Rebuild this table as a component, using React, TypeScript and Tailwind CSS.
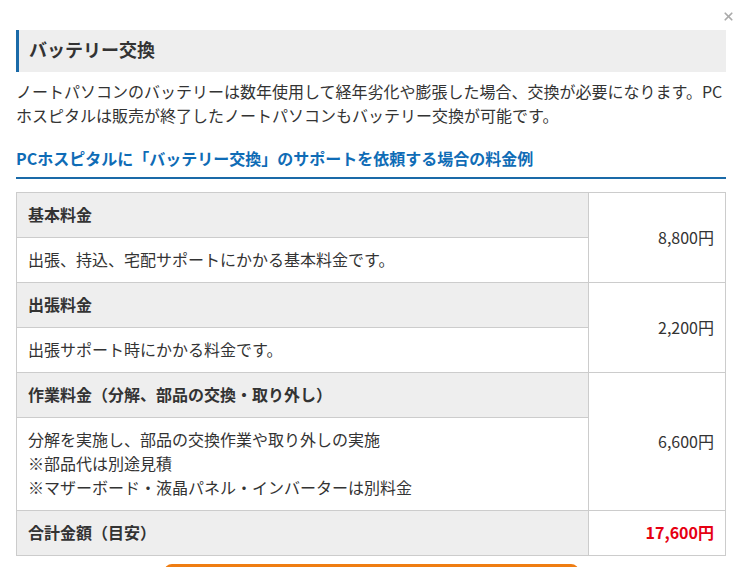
import { X } from 'lucide-react';

const rows = [
  {
    title: '基本料金',
    lines: ['出張、持込、宅配サポートにかかる基本料金です。'],
    price: '8,800円',
  },
  {
    title: '出張料金',
    lines: ['出張サポート時にかかる料金です。'],
    price: '2,200円',
  },
  {
    title: '作業料金（分解、部品の交換・取り外し）',
    lines: [
      '分解を実施し、部品の交換作業や取り外しの実施',
      '※部品代は別途見積',
      '※マザーボード・液晶パネル・インバーターは別料金',
    ],
    price: '6,600円',
  },
];

export default function App() {
  return (
    <div className="relative h-[567px] overflow-hidden bg-white px-4 pt-[30px] font-['Noto_Sans_CJK_JP',sans-serif] text-[#333]">
      <button className="absolute right-[6px] top-[9px] p-[1px] text-[#aaa]">
        <X size={13} strokeWidth={3.2} />
      </button>

      <h2 className="border-l-[3px] border-[#1a6aa8] bg-[#eee] pb-[10px] pl-[10px] pt-[6px] text-[18px] font-bold leading-[26px] text-[#333]">
        バッテリー交換
      </h2>

      <p className="mt-[7px] text-[16px] leading-6">
        ノートパソコンのバッテリーは数年使用して経年劣化や膨張した場合、交換が必要になります。PCホスピタルは販売が終了したノートパソコンもバッテリー交換が可能です。
      </p>

      <h3 className="mt-[19px] border-b-2 border-[#1a6aa8] pb-[7px] text-[16px] font-bold leading-6 text-[#0f6cb6]">
        PCホスピタルに「バッテリー交換」のサポートを依頼する場合の料金例
      </h3>

      <table className="mt-[13px] w-full border-collapse text-[16px] leading-6">
        <tbody>
          {rows.map((row) => (
            <>
              <tr key={row.title + '-h'}>
                <th className="w-[572px] border border-[#ccc] bg-[#eee] px-[11px] pb-[11px] pt-[9px] text-left font-bold">
                  {row.title}
                </th>
                <td
                  rowSpan={2}
                  className="border border-[#ccc] px-[11px] pb-[11px] pt-[9px] text-right align-middle"
                >
                  {row.price}
                </td>
              </tr>
              <tr key={row.title + '-d'}>
                <td className="border border-[#ccc] px-[11px] pb-[11px] pt-[9px]">
                  {row.lines.map((line) => (
                    <div key={line}>{line}</div>
                  ))}
                </td>
              </tr>
            </>
          ))}
          <tr>
            <th className="border border-[#ccc] bg-[#eee] px-[11px] pb-[11px] pt-[9px] text-left font-bold">
              合計金額（目安）
            </th>
            <td className="border border-[#ccc] px-[11px] pb-[11px] pt-[9px] text-right font-bold text-[#e60012]">
              17,600円
            </td>
          </tr>
        </tbody>
      </table>

      <div className="mx-auto mt-[8px] h-[48px] w-[415px] rounded-[8px] bg-[#ef7d12]" />
    </div>
  );
}
